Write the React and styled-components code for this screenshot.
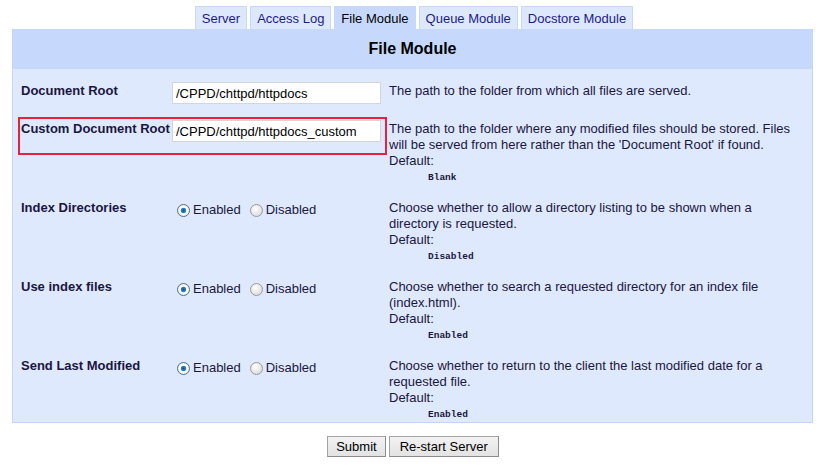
import React from "react";
import styled, { createGlobalStyle } from "styled-components";

const Global = createGlobalStyle`
  html, body { margin: 0; padding: 0; background: #ffffff; }
  body { font-family: "Liberation Sans", Arial, sans-serif; font-size: 13px; }
`;

const Page = styled.div`
  padding: 6px 12px 0 12px;
  width: 801px;
`;

const Tabs = styled.div`
  display: flex;
  justify-content: center;
  gap: 3px;
  padding-left: 3px;
`;

const Tab = styled.div`
  height: 23px;
  box-sizing: border-box;
  padding: 4px 6px 0 6px;
  border: 1px solid #c7d9f8;
  border-bottom: none;
  background: ${(p) => (p.$active ? "#c6d9fd" : "#dde8fd")};
  color: ${(p) => (p.$active ? "#000000" : "#1c1c86")};
  font-size: 13px;
  line-height: 15px;
  white-space: nowrap;
`;

const Panel = styled.div`
  border: 1px solid #c2d6f8;
  border-top: none;
  background: #dfe9fd;
`;

const Header = styled.div`
  height: 40px;
  background: #c6d9fd;
  display: flex;
  align-items: center;
  justify-content: center;
  font-weight: bold;
  font-size: 16px;
  color: #000;
`;

const Body = styled.div`
  display: flex;
  flex-direction: column;
  gap: 15px;
  padding: 13px 8px 1px 8px;
`;

const Row = styled.div`
  position: relative;
  display: flex;
  align-items: flex-start;
  min-height: 23px;
`;

const Label = styled.div`
  width: 151px;
  flex: none;
  font-weight: bold;
  font-size: 13px;
  line-height: 16px;
  color: #1a1640;
  padding-top: 1px;
`;

const Field = styled.div`
  width: 217px;
  flex: none;
`;

const TextInput = styled.input`
  box-sizing: border-box;
  width: 209px;
  height: 22px;
  margin: 0;
  border: 1px solid #d6d6d6;
  background: #fff;
  padding: 1px 3px 0 3px;
  font-family: "Liberation Sans", Arial, sans-serif;
  font-size: 13px;
  color: #000;
  outline: none;
`;

const Options = styled.div`
  display: flex;
  align-items: center;
  gap: 9px;
  padding-top: 3px;
  padding-left: 5px;
`;

const Option = styled.label`
  display: flex;
  align-items: center;
  gap: 3px;
  font-size: 13px;
  line-height: 16px;
  color: #1a1640;
`;

const Radio = styled.input.attrs({ type: "radio" })`
  appearance: none;
  -webkit-appearance: none;
  margin: 0;
  width: 13px;
  height: 13px;
  border-radius: 50%;
  border: 1px solid #9a9a9a;
  background: radial-gradient(circle at 40% 35%, #ffffff 0%, #e4e4e4 60%, #cfcfcf 100%);
  box-sizing: border-box;
  &:checked {
    border-color: #4f6f8f;
    background: radial-gradient(circle at 50% 50%, #1c4f7c 0%, #2c8ad0 32%, #ffffff 40%, #e9eef3 75%, #c8d3dd 100%);
  }
`;

const Desc = styled.div`
  flex: 1;
  font-size: 13px;
  line-height: 16px;
  color: #1a1640;
  padding-top: 1px;
`;

const DefaultValue = styled.div`
  margin-left: 39px;
  height: 15px;
  line-height: 17px;
  font-family: "Liberation Mono", "Courier New", monospace;
  font-weight: bold;
  font-size: 9.5px;
  color: #1a1640;
`;

const Highlight = styled.div`
  position: absolute;
  left: -3px;
  top: -3px;
  width: 369px;
  height: 38px;
  box-sizing: border-box;
  border: 2px solid #e8213c;
  pointer-events: none;
`;

const Buttons = styled.div`
  display: flex;
  justify-content: center;
  gap: 3px;
  margin-top: 13px;
  padding-left: 1px;
`;

const Button = styled.button`
  height: 21px;
  box-sizing: border-box;
  padding: 0 ${(p) => p.$pad}px;
  border: 1px solid #a3a3a3;
  border-right-color: #8c8c8c;
  border-bottom-color: #8c8c8c;
  background: linear-gradient(#f2f2f2, #e3e3e3);
  font-family: "Liberation Sans", Arial, sans-serif;
  font-size: 13px;
  color: #000;
  border-radius: 0;
  white-space: nowrap;
`;

const tabs = ["Server", "Access Log", "File Module", "Queue Module", "Docstore Module"];

const radioRows = [
  {
    label: "Index Directories",
    name: "indexdirs",
    desc: "Choose whether to allow a directory listing to be shown when a directory is requested.",
    def: "Disabled",
  },
  {
    label: "Use index files",
    name: "indexfiles",
    desc: "Choose whether to search a requested directory for an index file (index.html).",
    def: "Enabled",
  },
  {
    label: "Send Last Modified",
    name: "lastmod",
    desc: "Choose whether to return to the client the last modified date for a requested file.",
    def: "Enabled",
  },
];

export default function App() {
  return (
    <Page>
      <Global />
      <Tabs>
        {tabs.map((t) => (
          <Tab key={t} $active={t === "File Module"}>
            {t}
          </Tab>
        ))}
      </Tabs>
      <Panel>
        <Header>File Module</Header>
        <Body>
          <Row>
            <Label>Document Root</Label>
            <Field>
              <TextInput defaultValue="/CPPD/chttpd/httpdocs" />
            </Field>
            <Desc>The path to the folder from which all files are served.</Desc>
          </Row>
          <Row>
            <Highlight />
            <Label>Custom Document Root</Label>
            <Field>
              <TextInput defaultValue="/CPPD/chttpd/httpdocs_custom" />
            </Field>
            <Desc>
              The path to the folder where any modified files should be stored. Files will be served
              from here rather than the 'Document Root' if found.
              <br />
              Default:
              <DefaultValue>Blank</DefaultValue>
            </Desc>
          </Row>
          {radioRows.map((r) => (
            <Row key={r.name}>
              <Label>{r.label}</Label>
              <Field>
                <Options>
                  <Option>
                    <Radio name={r.name} defaultChecked />
                    Enabled
                  </Option>
                  <Option>
                    <Radio name={r.name} />
                    Disabled
                  </Option>
                </Options>
              </Field>
              <Desc>
                {r.desc}
                <br />
                Default:
                <DefaultValue>{r.def}</DefaultValue>
              </Desc>
            </Row>
          ))}
        </Body>
      </Panel>
      <Buttons>
        <Button $pad={8}>Submit</Button>
        <Button $pad={10}>Re-start Server</Button>
      </Buttons>
    </Page>
  );
}
